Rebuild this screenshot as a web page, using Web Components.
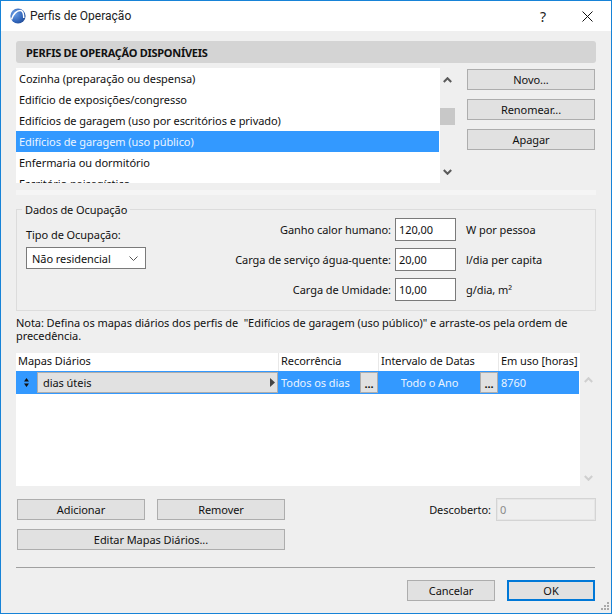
<!DOCTYPE html>
<html lang="pt"><head><meta charset="utf-8"><title>Perfis de Operação</title>
<style>
html,body{margin:0;padding:0;background:#efefef}
body{font:11px/13px "Noto Sans","Open Sans",sans-serif;color:#111}
</style></head><body>
<ui-dialog>
  <ui-titlebar slot="title">Perfis de Operação</ui-titlebar>
  <ui-heading>PERFIS DE OPERAÇÃO DISPONÍVEIS</ui-heading>
  <ui-profile-row>
    <ui-listbox>
      <ui-item>Cozinha (preparação ou despensa)</ui-item>
      <ui-item>Edifício de exposições/congresso</ui-item>
      <ui-item>Edifícios de garagem (uso por escritórios e privado)</ui-item>
      <ui-item selected>Edifícios de garagem (uso público)</ui-item>
      <ui-item>Enfermaria ou dormitório</ui-item>
      <ui-item>Escritório paisagístico</ui-item>
    </ui-listbox>
    <ui-scroll thumb style="--w:15px;--h:115px;--top:9px;--bottom:8px"></ui-scroll>
    <ui-stack slot="actions">
      <ui-btn style="--w:128px">Novo...</ui-btn>
      <ui-btn style="--w:128px">Renomear...</ui-btn>
      <ui-btn style="--w:128px">Apagar</ui-btn>
    </ui-stack>
  </ui-profile-row>
  <ui-strip></ui-strip>
  <ui-group legend="Dados de Ocupação">
    <ui-select slot="left" label="Tipo de Ocupação:" value="Não residencial"></ui-select>
    <ui-field label="Ganho calor humano:" value="120,00">W por pessoa</ui-field>
    <ui-field label="Carga de serviço água-quente:" value="20,00">l/dia per capita</ui-field>
    <ui-field label="Carga de Umidade:" value="10,00">g/dia, m²</ui-field>
  </ui-group>
  <ui-note>Nota: Defina os mapas diários dos perfis de&nbsp; "Edifícios de garagem (uso público)" e arraste-os pela ordem de precedência.</ui-note>
  <ui-table></ui-table>
  <ui-bottom></ui-bottom>
  <ui-footer></ui-footer>
</ui-dialog>
<script>
function def(name, css, html, init){
  customElements.define(name, class extends HTMLElement{
    connectedCallback(){
      if(this.shadowRoot) return;
      const r=this.attachShadow({mode:'open'});
      r.innerHTML='<style>'+css+'</style>'+(typeof html==='function'?html(this):html);
      if(init) init(this,r);
    }
  });
}
const FONT='font:11px/13px "Noto Sans","Open Sans",sans-serif;letter-spacing:-.06px;';
def('ui-dialog',`:host{display:block;position:relative;width:612px;height:614px;box-sizing:border-box;border:1px solid #1783d7;background:#efefef;overflow:hidden;${FONT}color:#111}
.c{display:flex;flex-direction:column;padding:10px 15px 0}
.g{position:absolute;right:1px;bottom:1px;display:block}`,
`<slot name="title"></slot><div class="c"><slot></slot></div>
<svg class="g" width="10" height="10" viewBox="0 0 10 10" fill="#a9a9a9"><rect x="7" y="0" width="2" height="2"/><rect x="4" y="3" width="2" height="2"/><rect x="7" y="3" width="2" height="2"/><rect x="1" y="6" width="2" height="2"/><rect x="4" y="6" width="2" height="2"/><rect x="7" y="6" width="2" height="2"/></svg>`);

def('ui-titlebar',`:host{display:flex;align-items:center;height:30px;background:#fff;position:relative;letter-spacing:0}
svg{margin-left:9px;flex:none}
.t{margin-left:4px;color:#222;font:12px/16px Roboto,"Noto Sans",sans-serif}
.q{margin-left:auto;font-size:14px;color:#222;width:12px;text-align:center}
.x{margin:0 18px 0 33px;display:block}`,
`<svg width="16" height="16" viewBox="0 0 16 16"><defs><radialGradient id="b" cx=".3" cy=".35" r=".9"><stop offset="0" stop-color="#6d9fe6"/><stop offset=".6" stop-color="#2f63b8"/><stop offset="1" stop-color="#1d3f7c"/></radialGradient></defs><circle cx="8" cy="8" r="7.6" fill="url(#b)"/><path d="M1.5 11.5C3 6 7 2.4 10.4 2.6c2.2.1 3.3 3 3.4 7.4" fill="none" stroke="#fff" stroke-width="1.5"/></svg>
<span class="t"><slot></slot></span><span class="q">?</span>
<svg class="x" width="11" height="11" viewBox="0 0 11 11"><path d="M.5.5l10 10M10.5.5l-10 10" stroke="#111" stroke-width="1" fill="none"/></svg>`);

def('ui-heading',`:host{display:flex;align-items:center;height:22px;box-sizing:border-box;padding-left:10px;background:#d4d4d4;border-radius:3px;font-weight:700;letter-spacing:-.27px}`,`<slot></slot>`);

def('ui-profile-row',`:host{display:flex;margin-top:5px;height:115px}
.a{margin-left:12px;padding-top:1px}`,`<slot></slot><div class="a"><slot name="actions"></slot></div>`);

def('ui-listbox',`:host{display:block;width:424px;height:115px;background:#fff;overflow:hidden}`,`<slot></slot>`);
def('ui-item',`:host{display:flex;align-items:center;height:21px;width:423px;box-sizing:border-box;padding-left:3px;color:#111;white-space:nowrap}
:host([selected]){background:#3399ff;color:#eaf4ff}`,`<slot></slot>`);

const chev=(c,d)=>`<svg width="9" height="6" viewBox="0 0 9 6"><path d="${d==='u'?'M.8 5L4.5 1.2 8.2 5':'M.8 1L4.5 4.8 8.2 1'}" fill="none" stroke="${c}" stroke-width="2"/></svg>`;
def('ui-scroll',`:host{display:flex;flex-direction:column;align-items:center;justify-content:space-between;position:relative;box-sizing:border-box;width:var(--w);height:var(--h);padding:var(--top) 0 var(--bottom)}
svg{display:block}
.th{position:absolute;left:0;top:40px;width:15px;height:17px;background:#c8c8c8}`,
(h)=>{const c=h.hasAttribute('pale')?'#cfcfcf':'#5a5a5a';return chev(c,'u')+(h.hasAttribute('thumb')?'<div class="th"></div>':'')+chev(c,'d');});

def('ui-stack',`:host{display:flex;flex-direction:column;gap:9px}`,`<slot></slot>`);
def('ui-btn',`:host{display:flex;align-items:center;justify-content:center;box-sizing:border-box;width:var(--w);height:21px;background:#e1e1e1;border:1px solid #adadad;color:#111;white-space:nowrap}
:host([primary]){border:2px solid #0078d7}`,`<slot></slot>`);
def('ui-strip',`:host{display:block;height:5px;margin-top:7px;background:#f5f5f5}`,`<slot></slot>`);

def('ui-group',`:host{display:flex;position:relative;box-sizing:border-box;height:102px;margin-top:14px;border:1px solid #dcdcdc;padding:8px 0 0 9px}
.lg{position:absolute;left:5px;top:-7px;padding:0 3px;background:#efefef;color:#111}
.l{width:120px;flex:none;padding-top:10px}
.r{margin-left:auto;width:370px;display:flex;flex-direction:column;gap:7px}`,
(h)=>`<span class="lg">${h.getAttribute('legend')}</span><div class="l"><slot name="left"></slot></div><div class="r"><slot></slot></div>`);

def('ui-select',`:host{display:block}
.s{display:flex;align-items:center;justify-content:space-between;box-sizing:border-box;width:120px;height:22px;margin-top:6px;padding:0 7px 0 5px;background:#fff;border:1px solid #7a7a7a}
svg{display:block}`,
(h)=>`<div>${h.getAttribute('label')}</div><div class="s"><span>${h.getAttribute('value')}</span><svg width="9" height="5" viewBox="0 0 9 5"><path d="M.5.5l4 4 4-4" fill="none" stroke="#555"/></svg></div>`);

def('ui-field',`:host{display:flex;align-items:center;height:23px}
.lb{flex:1;text-align:right;white-space:nowrap}
.i{width:61px;height:23px;box-sizing:border-box;margin-left:4px;padding-left:3px;display:flex;align-items:center;background:#fff;border:1px solid #7a7a7a;flex:none}
.u{width:129px;margin-left:10px;flex:none;white-space:nowrap}`,
(h)=>`<span class="lb">${h.getAttribute('label')}</span><span class="i">${h.getAttribute('value')}</span><span class="u"><slot></slot></span>`);

def('ui-note',`:host{display:block;margin-top:5px;height:26px;width:580px;line-height:13px}`,`<slot></slot>`);

def('ui-cell-btn',`:host{display:flex;align-items:flex-end;justify-content:center;box-sizing:border-box;width:18px;height:21px;margin:1px 0;padding-bottom:4px;background:#e1e1e1;border:1px solid #adadad;color:#111;font-weight:700;line-height:8px;flex:none}`,`<slot></slot>`);

def('ui-table',`:host{display:flex;margin-top:11px;height:133px}
.t{width:564px;background:#fff;flex:none}
.h{display:grid;grid-template-columns:263px 100px 120px 81px;height:18px}
.h div{box-sizing:border-box;padding:1px 0 0 2px;border-right:1px solid #e8e8e8;white-space:nowrap}
.h div:last-child{border-right:0}
.row{display:flex;height:23px;width:563px;background:#3399ff;color:#eaf4ff}
.drag{width:21px;display:flex;align-items:center;justify-content:center;flex:none}
.map{display:flex;align-items:center;justify-content:space-between;box-sizing:border-box;width:241px;height:21px;margin:1px 0;padding:0 2px 0 5px;background:#e1e1e1;border:1px solid #adadad;color:#111;flex:none}
.c{display:flex;align-items:center;box-sizing:border-box;flex:none;white-space:nowrap}
.sep{width:1px;flex:none}
svg{display:block}`,
`<div class="t">
<div class="h"><div>Mapas Diários</div><div>Recorrência</div><div>Intervalo de Datas</div><div>Em uso [horas]</div></div>
<div class="row">
<div class="drag"><svg width="5" height="9" viewBox="0 0 5 9" fill="#111"><path d="M2.5 0L5 3.4H0zM2.5 9L0 5.6h5z"/></svg></div>
<div class="map"><span>dias úteis</span><svg width="5" height="9" viewBox="0 0 5 9" fill="#444"><path d="M0 0l5 4.5L0 9z"/></svg></div>
<div class="sep"></div>
<div class="c" style="width:81px;padding-left:2px">Todos os dias</div><ui-cell-btn>...</ui-cell-btn><div class="sep"></div>
<div class="c" style="width:101px;justify-content:center">Todo o Ano</div><ui-cell-btn>...</ui-cell-btn><div class="sep"></div>
<div class="c" style="width:80px;padding-left:2px">8760</div>
</div></div>
<ui-scroll pale style="--w:16px;--h:133px;--top:24px;--bottom:5px"></ui-scroll>`);

def('ui-bottom',`:host{display:flex;margin-top:12px;padding-left:1px;position:relative;height:52px}
.l{display:flex;flex-direction:column;gap:9px;padding-top:1px}
.rw{display:flex;gap:12px}
.d{margin-left:auto;display:flex;align-items:center;height:23px;gap:5px}
.i{display:flex;align-items:center;box-sizing:border-box;width:100px;height:23px;padding-left:3px;border:1px solid #d4d4d4;box-shadow:inset 0 0 0 1px #e6e6e6;color:#8a8a8a}`,
`<div class="l"><div class="rw"><ui-btn style="--w:128px">Adicionar</ui-btn><ui-btn style="--w:128px">Remover</ui-btn></div><ui-btn style="--w:268px">Editar Mapas Diários...</ui-btn></div>
<div class="d"><span>Descoberto:</span><span class="i">0</span></div>`);

def('ui-footer',`:host{display:flex;justify-content:flex-end;gap:12px;margin-top:17px;width:579px;box-sizing:border-box;border-top:1px solid #a0a0a0;padding-top:12px}`,
`<ui-btn style="--w:88px">Cancelar</ui-btn><ui-btn primary style="--w:88px">OK</ui-btn>`);
</script>
</body></html>
